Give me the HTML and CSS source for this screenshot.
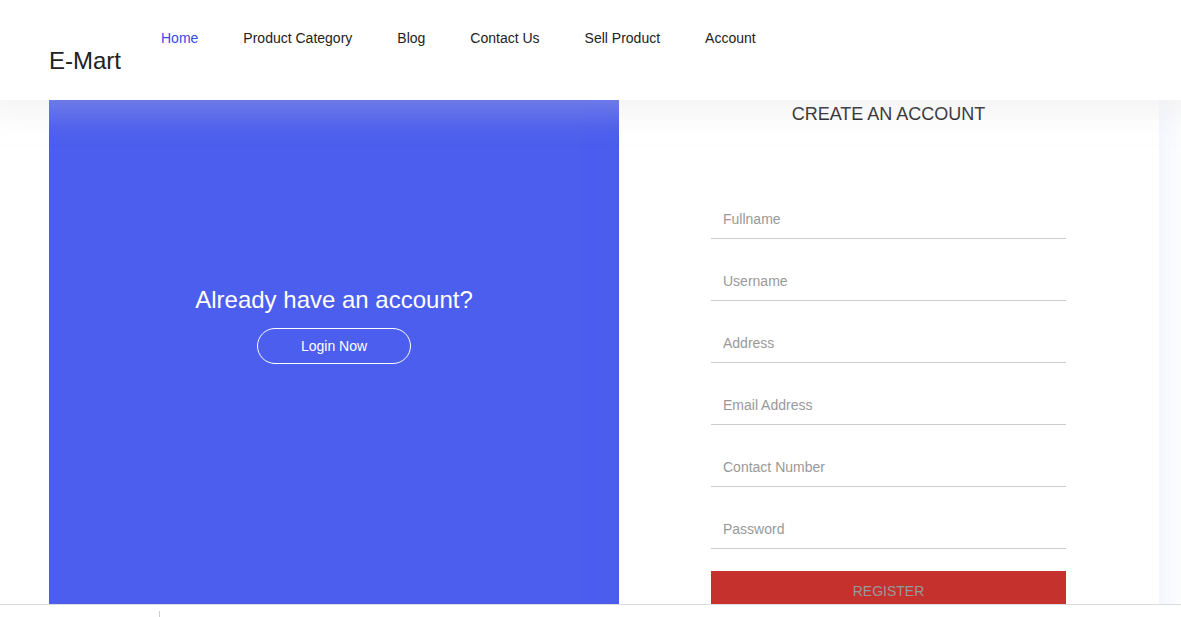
FILE: index.html
```html
<!DOCTYPE html>
<html lang="en">
<head>
<meta charset="utf-8">
<title>E-Mart</title>
<link rel="stylesheet" href="styles.css">
</head>
<body>
<header class="site-header">
  <a class="brand" href="#">E-Mart</a>
  <nav class="site-nav">
    <a class="nav-link active" href="#">Home</a>
    <a class="nav-link" href="#">Product Category</a>
    <a class="nav-link" href="#">Blog</a>
    <a class="nav-link" href="#">Contact Us</a>
    <a class="nav-link" href="#">Sell Product</a>
    <a class="nav-link" href="#">Account</a>
  </nav>
</header>
<main class="content">
  <section class="login-panel">
    <h2 class="login-title">Already have an account?</h2>
    <a class="login-button" href="#">Login Now</a>
  </section>
  <section class="register-panel">
    <h1 class="register-title">CREATE AN ACCOUNT</h1>
    <form class="register-form">
      <input class="field" type="text" placeholder="Fullname" aria-label="Fullname">
      <input class="field" type="text" placeholder="Username" aria-label="Username">
      <input class="field" type="text" placeholder="Address" aria-label="Address">
      <input class="field" type="email" placeholder="Email Address" aria-label="Email Address">
      <input class="field" type="text" placeholder="Contact Number" aria-label="Contact Number">
      <input class="field" type="password" placeholder="Password" aria-label="Password">
      <button class="register-button" type="submit">REGISTER</button>
    </form>
  </section>
</main>
<footer class="bottom-bar"><span class="divider"></span></footer>
</body>
</html>
```
FILE: styles.css
```css
* {
  box-sizing: border-box;
}

body {
  margin: 0;
  height: 100vh;
  display: flex;
  flex-direction: column;
  overflow: hidden;
  background: #fff;
  color: #222;
  font: 14px/20px "Liberation Sans", Arial, sans-serif;
}

a {
  color: inherit;
  text-decoration: none;
}

.site-header {
  position: relative;
  z-index: 2;
  flex: none;
  display: flex;
  align-items: flex-start;
  gap: 40px;
  padding: 28px 49px 23px;
  background: #fff;
  box-shadow: 0 0 28px 14px rgba(216, 216, 216, 0.28);
}

.brand {
  padding-top: 17px;
  font-size: 24px;
  line-height: 32px;
}

.site-nav {
  display: flex;
  gap: 45px;
}

.nav-link.active {
  color: #384aeb;
}

.content {
  flex: 1;
  min-height: 0;
  display: grid;
  grid-template-columns: 57fr 54fr;
  padding: 0 22px 0 49px;
  overflow: hidden;
}

.login-panel {
  display: flex;
  flex-direction: column;
  align-items: center;
  padding-top: 184px;
  background: #4c5eee;
  color: #fff;
}

.login-title {
  margin: 0 0 12px;
  font-size: 24px;
  font-weight: 400;
  line-height: 32px;
}

.login-button {
  padding: 7px 43px;
  border: 1px solid #fff;
  border-radius: 18px;
}

.register-panel {
  min-height: 640px;
  padding: 0 93px 0 92px;
  box-shadow: 0 0 40px rgba(60, 80, 225, 0.1);
}

.register-title {
  margin: 0 0 75px;
  padding-top: 4px;
  font-size: 18px;
  font-weight: 400;
  line-height: 20px;
  text-align: center;
}

.register-form {
  display: flex;
  flex-direction: column;
  gap: 22px;
}

.field,
.register-button {
  width: 100%;
  height: 40px;
  padding: 0 12px;
  border: 0;
  border-radius: 0;
  font: inherit;
}

.field {
  border-bottom: 1px solid #ccc;
  background: transparent;
  outline: 0;
}

.field::placeholder {
  color: #999;
  opacity: 1;
}

.register-button {
  background: #c5322d;
  color: #999;
}

.bottom-bar {
  flex: none;
  display: flex;
  padding: 6px 159px 0;
  border-top: 1px solid #dadce0;
  background: #fff;
  position: relative;
  z-index: 1;
}

.divider {
  width: 1px;
  height: 6px;
  background: #ccc;
}
```
